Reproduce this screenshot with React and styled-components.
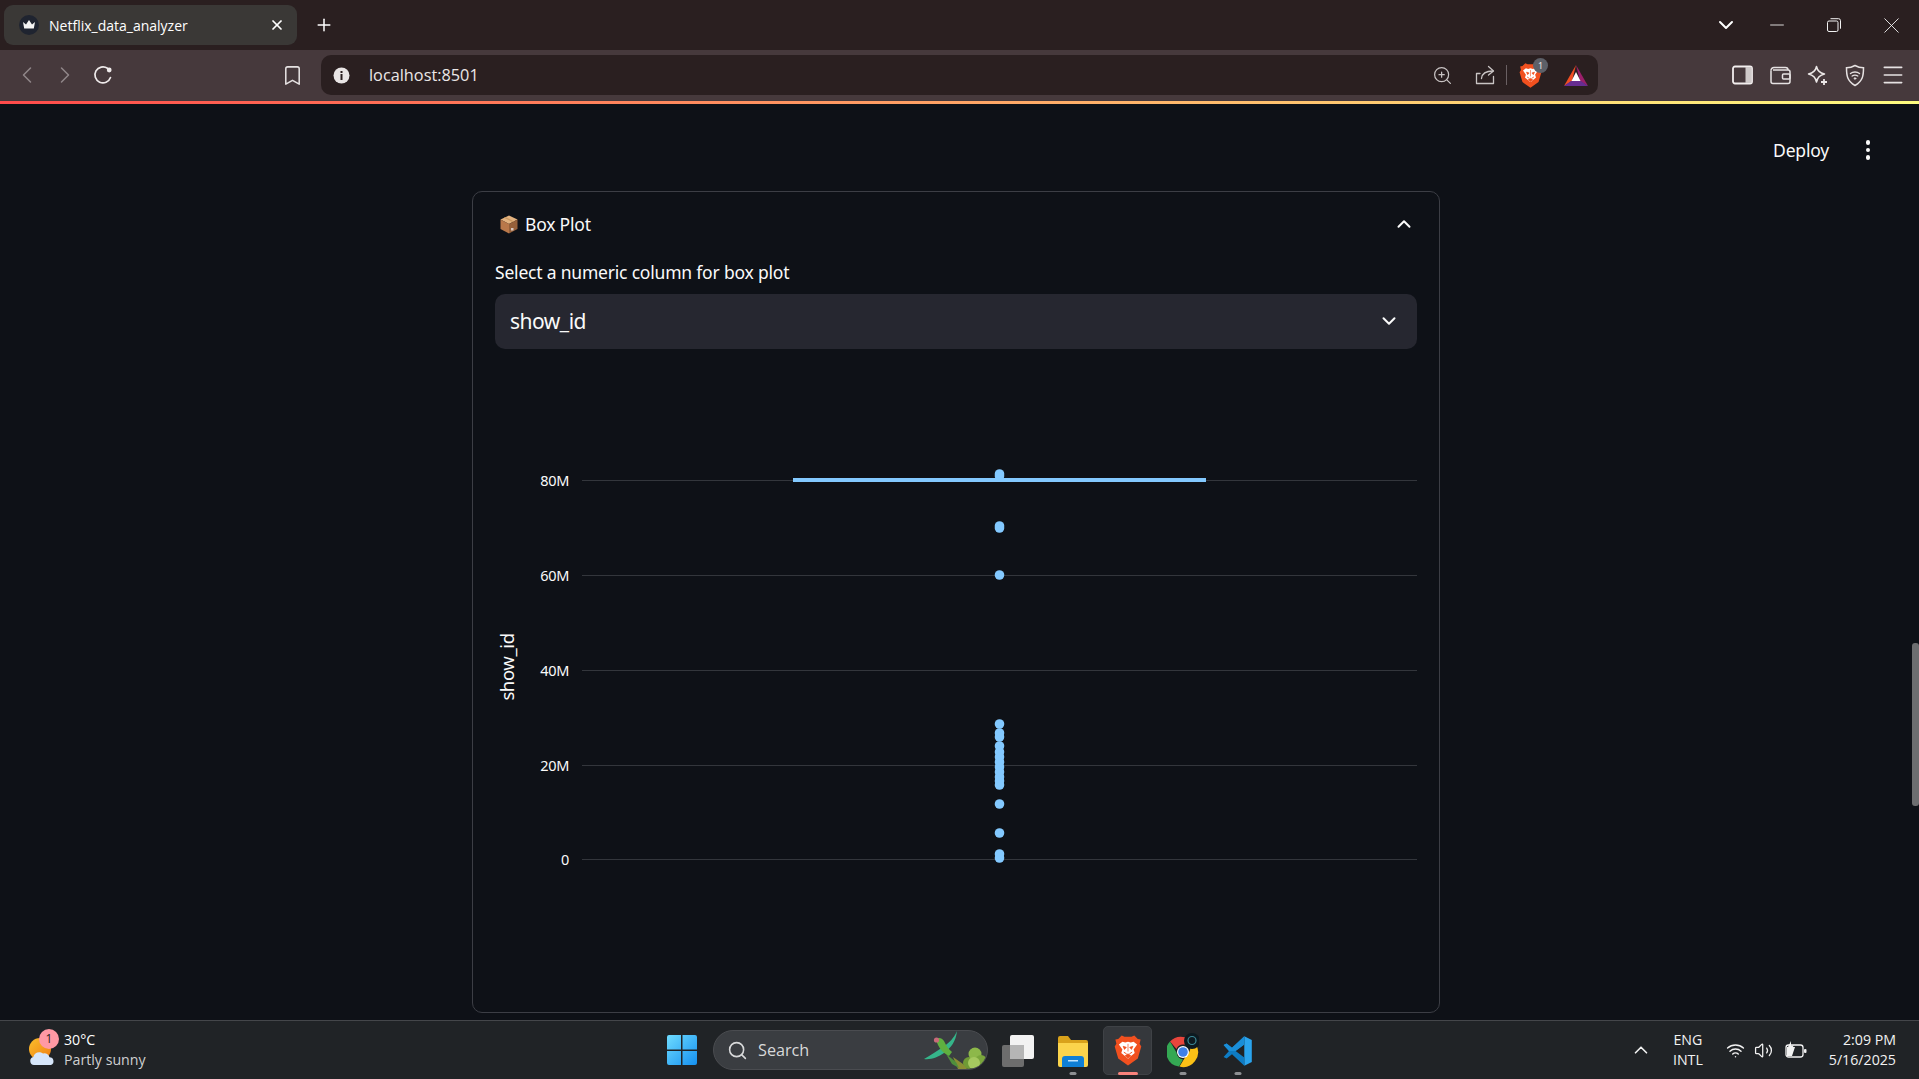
import React from 'react';
import styled, { createGlobalStyle } from 'styled-components';
import {
  ChevronLeft, ChevronRight, ChevronDown, ChevronUp, Bookmark, ZoomIn, Plus, X, Minus,
  Menu, Search, Wifi, Volume2,
} from 'lucide-react';

const GlobalStyle = createGlobalStyle`
  html, body { margin: 0; padding: 0; background: #0e1117; }
  * { box-sizing: border-box; }
  body { font-family: "Noto Sans", "Open Sans", sans-serif; color: #fafafa; }
`;

const Page = styled.div`
  height: 100vh;
  display: flex;
  flex-direction: column;
  overflow: hidden;
`;

/* browser chrome */
const TabStrip = styled.div`
  height: 50px;
  flex: none;
  display: flex;
  align-items: stretch;
  padding: 5px 0 5px 4px;
  background: #2a1f20;
  color: #fff;
`;

const Tab = styled.div`
  width: 293px;
  display: flex;
  align-items: center;
  padding: 0 12px 0 15px;
  background: #3a3836;
  border-radius: 9px;
  font-family: "Open Sans", sans-serif;
  font-size: 14px;
`;

const TabTitle = styled.span`
  flex: 1;
  margin-left: 10px;
  white-space: nowrap;
`;

const Slot = styled.div`
  position: relative;
  width: ${(p) => p.$w}px;
  height: 100%;
  flex: none;
  display: flex;
  align-items: center;
  justify-content: center;
  color: ${(p) => p.$color || 'inherit'};
`;

const Grow = styled.div`
  flex: 1;
`;

const Toolbar = styled.div`
  height: 51px;
  flex: none;
  display: flex;
  align-items: stretch;
  padding: 5px 7px 6px 8px;
  background: #46393c;
  color: #e6e2e2;
`;

const AddressBar = styled.div`
  width: 1277px;
  margin-left: 11px;
  margin-right: 126px;
  flex: none;
  display: flex;
  align-items: center;
  background: #2a1f20;
  border-radius: 10px;
`;

const Url = styled.span`
  margin-left: 8px;
  font-family: "Open Sans", sans-serif;
  font-size: 16.3px;
  color: #ebe7e7;
`;

const Divider = styled.div`
  width: 1px;
  height: 20px;
  background: #6a6063;
`;

const Badge = styled.span`
  position: absolute;
  top: 3px;
  left: 26px;
  width: 15px;
  height: 15px;
  border-radius: 50%;
  background: #5d6068;
  color: #e8e8e8;
  font-size: 9px;
  line-height: 15px;
  text-align: center;
`;

const LoadBar = styled.div`
  height: 3px;
  flex: none;
  background: linear-gradient(90deg, #ff4b4b, #fffd80);
`;

/* streamlit page */
const Main = styled.main`
  position: relative;
  flex: 1;
  min-height: 0;
  display: flex;
  flex-direction: column;
  background: #0e1117;
`;

const TopBar = styled.div`
  height: 87px;
  flex: none;
  display: flex;
  justify-content: flex-end;
  align-items: flex-start;
  padding: 34px 39px 0 0;
`;

const Deploy = styled.span`
  margin-right: 27px;
  font-size: 17.5px;
  line-height: 24px;
  letter-spacing: -0.2px;
`;

const Kebab = styled.div`
  width: 24px;
  height: 24px;
  display: flex;
  flex-direction: column;
  align-items: center;
  justify-content: center;
  gap: 3px;
  & > i {
    width: 4.5px;
    height: 4.5px;
    border-radius: 50%;
    background: #fafafa;
  }
`;

const Card = styled.section`
  width: 968px;
  height: 822px;
  flex: none;
  margin-left: 472px;
  padding: 0 22px 0 22px;
  border: 1px solid #3c3e45;
  border-radius: 10px;
`;

const Summary = styled.div`
  height: 66px;
  display: flex;
  align-items: center;
  padding: 0 2px 2px 5px;
  font-size: 17.5px;
  letter-spacing: -0.2px;
`;

const SummaryTitle = styled.span`
  flex: 1;
  margin-left: 7px;
`;

const FieldLabel = styled.div`
  height: 36px;
  padding-top: 2px;
  font-size: 17.5px;
  line-height: 24px;
  letter-spacing: -0.2px;
`;

const Select = styled.div`
  width: 922px;
  height: 55px;
  display: flex;
  align-items: center;
  justify-content: space-between;
  padding: 0 17px 1px 15px;
  background: #262730;
  border-radius: 10px;
  font-size: 21px;
  letter-spacing: -0.5px;
`;

const Chart = styled.svg`
  display: block;
  margin-top: 11px;
`;

const Tick = styled.text`
  fill: #fafafa;
  font-family: "Noto Sans", sans-serif;
  font-size: 14.5px;
  letter-spacing: -0.3px;
  text-anchor: end;
`;

const AxisTitle = styled.text`
  fill: #fafafa;
  font-family: "Noto Sans", sans-serif;
  font-size: 18.5px;
  letter-spacing: -0.4px;
  text-anchor: middle;
`;

const ScrollThumb = styled.div`
  position: absolute;
  top: 539px;
  right: 0;
  width: 7px;
  height: 163px;
  border-radius: 3px;
  background: #6d6e70;
`;

/* windows taskbar */
const Taskbar = styled.footer`
  height: 59px;
  flex: none;
  display: flex;
  align-items: stretch;
  background: #202326;
  border-top: 1px solid #44464a;
  font-family: "Open Sans", sans-serif;
  color: #fff;
`;

const Weather = styled.div`
  width: 661px;
  flex: none;
  display: flex;
  align-items: center;
  padding: 0 0 1px 28px;
`;

const WeatherIcon = styled.div`
  position: relative;
  width: 28px;
  height: 28px;
  margin: 4px 8px 0 0;
`;

const WeatherBadge = styled.span`
  position: absolute;
  top: -9px;
  left: 11px;
  width: 20px;
  height: 20px;
  border-radius: 50%;
  background: #ff99a4;
  color: #2a1f20;
  font-size: 12px;
  line-height: 20px;
  text-align: center;
`;

const TwoLines = styled.div`
  display: flex;
  flex-direction: column;
  align-items: ${(p) => p.$align || 'flex-start'};
  gap: 1px;
  margin: 0 ${(p) => p.$right || 0}px 1px ${(p) => p.$left || 0}px;
  font-size: 14.2px;
  line-height: 19px;
`;

const Muted = styled.span`
  color: #cfd0d1;
`;

const WinSlot = styled(Slot)`
  height: auto;
`;

const SearchPill = styled.div`
  width: 275px;
  height: 40px;
  margin: auto 5px auto 10px;
  flex: none;
  display: flex;
  align-items: center;
  padding-left: 13px;
  border-radius: 20px;
  background: #3a3d41;
  border: 1px solid #4a4c50;
  color: #d8d9da;
  font-size: 16.2px;
  overflow: hidden;
`;

const SearchText = styled.span`
  flex: 1;
  margin-left: 10px;
`;

const Tile = styled(Slot)`
  margin: 5px 0 4px;
  height: auto;
  border-radius: 5px;
  background: ${(p) => (p.$active ? '#35383c' : 'transparent')};
  border: 1px solid ${(p) => (p.$active ? '#3f4246' : 'transparent')};
  &::after {
    content: '';
    display: ${(p) => (p.$dot ? 'block' : 'none')};
    position: absolute;
    bottom: -1px;
    left: 50%;
    transform: translateX(-50%);
    width: ${(p) => (p.$active ? 20 : 7)}px;
    height: 3px;
    border-radius: 2px;
    background: ${(p) => (p.$active ? '#f8837c' : '#8d8f92')};
  }
`;

const Tray = styled.div`
  margin-left: auto;
  padding-right: 23px;
  display: flex;
  align-items: center;
  color: #f2f2f2;
`;

/* drawings */
const Favicon = () => (
  <svg width="20" height="20" viewBox="0 0 20 20">
    <circle cx="10" cy="10" r="10" fill="#1f2430" />
    <path d="M4 7l3 2.5L10 5l3 4.5L16 7l-1.2 6.5H5.2z" fill="#f5f5f5" />
  </svg>
);

const Reload = () => (
  <svg width="22" height="22" viewBox="0 0 22 22" fill="none">
    <path d="M18.500 13.500A8 8 0 1 1 15.500 4.300" stroke="#eeeaea" strokeWidth="1.700" strokeLinecap="round" />
    <circle cx="17.200" cy="6" r="2.400" fill="#eeeaea" />
  </svg>
);

const InfoDot = () => (
  <svg width="17" height="17" viewBox="0 0 17 17">
    <circle cx="8.5" cy="8.5" r="8" fill="#e9e5e5" />
    <rect x="7.5" y="7" width="2" height="6" fill="#2a1f20" />
    <rect x="7.5" y="4" width="2" height="2" fill="#2a1f20" />
  </svg>
);

const ShareIcon = () => (
  <svg width="20" height="20" viewBox="0 0 20 20" fill="none" stroke="#c9c4c4" strokeWidth="1.3" strokeLinecap="round" strokeLinejoin="round">
    <path d="M5 8.5H1.5V18.5H18.5V11.5" />
    <path d="M6.5 13.5C7 8 11 6 18 6" />
    <path d="M13.5 1.5L18.5 6l-5 4" />
  </svg>
);

const BraveLogo = ({ size = 23 }) => (
  <svg width={size} height={size * 1.15} viewBox="0 0 20 23">
    <path d="M5.500 1L7.500 2h5L14.500 1 17 3.500 19 4 18.300 7 19.500 9 17 17.500 10 22.500 3 17.500.5 9 1.700 7 1 4 3 3.500z" fill="#f1501f" />
    <path d="M3.500 7.500L6 5.500 8 6l2-.5 2 .5 2-.5 2.500 2-2.500 3.500.8 2.500-3.300 2.800-1 1.200h-1l-1-1.200L5.200 13.500 6 11z" fill="#fff" />
    <path d="M6.500 8.800l2.300.7-1.300 1.500zM13.500 8.800l-2.300.7 1.300 1.500zM10 7v5.500M8 15.500l2-1.300 2 1.300-2 2z" fill="#f1501f" stroke="#f1501f" strokeWidth=".5" />
    <path d="M7 13l2 1.200M13 13l-2 1.200" stroke="#f1501f" strokeWidth=".7" />
  </svg>
);

const BatLogo = () => (
  <svg width="24" height="22" viewBox="0 0 24 22">
    <polygon points="12,1 0,22 8,17" fill="#f04e22" />
    <polygon points="12,1 24,22 16,17" fill="#9b1f6b" />
    <polygon points="0,22 24,22 17,17 7,17" fill="#662d91" />
    <polygon points="12,8 7.5,17 16.5,17" fill="#fff" />
  </svg>
);

const SidebarIcon = () => (
  <svg width="21" height="20" viewBox="0 0 21 20" fill="none">
    <rect x="1" y="1.5" width="19" height="17" rx="2" stroke="#f2eeee" strokeWidth="1.8" />
    <rect x="13.5" y="2" width="6" height="16" fill="#cfcaca" />
  </svg>
);

const WalletIcon = () => (
  <svg width="21" height="20" viewBox="0 0 21 20" fill="none" stroke="#e6e2e2" strokeWidth="1.5" strokeLinejoin="round">
    <path d="M1 5.5V16.5a2 2 0 0 0 2 2H18a2 2 0 0 0 2-2V7a2 2 0 0 0-2-2H3" />
    <path d="M1 5.5A3 3 0 0 1 4 2.5H15.5a2.5 2.5 0 0 1 2.5 2.5" />
    <rect x="12.5" y="9" width="7.5" height="5" rx="1" />
  </svg>
);

const LeoIcon = () => (
  <svg width="21" height="21" viewBox="0 0 21 21" fill="none" stroke="#ebe7e7" strokeWidth="1.5" strokeLinejoin="round">
    <path d="M9.500 1.500c.8 4 3 6.300 8 7.500-5 1.200-7.200 3.500-8 8-.8-4.500-3-6.800-8-8 5-1.200 7.200-3.500 8-7.500z" />
    <path d="M17 14v6M14 17h6" strokeWidth="1.800" />
  </svg>
);

const ShieldIcon = () => (
  <svg width="20" height="23" viewBox="0 0 20 23" fill="none" stroke="#e6e2e2" strokeLinecap="round">
    <path d="M10 1.500c2.500 1.500 5.500 2.300 8.500 2.300 0 7.500-.5 13-8.500 17.700C2 16.800 1.500 11.300 1.500 3.800c3 0 6-.8 8.500-2.300z" strokeWidth="1.500" />
    <path d="M5.500 9.500c2.500-2 6.500-2 9 0M7.200 12c1.500-1 4-1 5.600 0" strokeWidth="1.400" />
    <circle cx="10" cy="14.500" r=".8" fill="#e6e2e2" />
  </svg>
);

const RestoreIcon = () => (
  <svg width="14" height="14" viewBox="0 0 14 14" fill="none" stroke="#f2f2f2" strokeWidth="1">
    <rect x=".5" y="3" width="10.500" height="10.500" rx="1.500" />
    <path d="M3.500.7h8a2 2 0 0 1 2 2v8" />
  </svg>
);

const BoxEmoji = () => (
  <svg width="18" height="19" viewBox="0 0 18 19">
    <polygon points="9,0.500 17.500,4.500 9,9 0.500,4.500" fill="#e3b27f" />
    <polygon points="0.500,4.500 9,9 9,18.500 0.500,14" fill="#b9784a" />
    <polygon points="17.500,4.500 9,9 9,18.500 17.500,14" fill="#96603a" />
    <polygon points="4,2.700 12.500,7.100 14,6.400 5.500,2" fill="#c9975f" />
    <rect x="11" y="13" width="2.500" height="2.500" fill="#d9c8c0" />
  </svg>
);

const WeatherArt = () => (
  <svg width="28" height="28" viewBox="0 0 28 28">
    <defs>
      <linearGradient id="sun" x1="0" y1="0" x2="1" y2="1">
        <stop offset="0" stopColor="#fbbf2c" />
        <stop offset="1" stopColor="#ef7d12" />
      </linearGradient>
    </defs>
    <circle cx="12" cy="11" r="11" fill="url(#sun)" />
    <path d="M6 27a4 4 0 0 1-.6-7.900A6 6 0 0 1 15 15.500a5 5 0 0 1 6.500 3.800A4 4 0 0 1 23 27z" fill="#d6e6fa" />
  </svg>
);

const WinLogo = () => (
  <svg width="30" height="30" viewBox="0 0 30 30">
    <defs>
      <linearGradient id="win" x1="0" y1="0" x2="1" y2="1">
        <stop offset="0" stopColor="#6fdcff" />
        <stop offset="1" stopColor="#1590f0" />
      </linearGradient>
    </defs>
    <path d="M0 2a2 2 0 0 1 2-2h12v14.500H0zM15.500 0H28a2 2 0 0 1 2 2v12.500H15.500zM0 16h14v14H2a2 2 0 0 1-2-2zM15.500 16H30v12a2 2 0 0 1-2 2H15.500z" fill="url(#win)" />
  </svg>
);

const Parrot = () => (
  <svg width="64" height="40" viewBox="0 0 64 40">
    <circle cx="46" cy="33" r="6" fill="#6f9a35" />
    <circle cx="52" cy="24" r="6.500" fill="#8db84a" />
    <circle cx="58" cy="31" r="6" fill="#7aa63c" />
    <circle cx="51" cy="33" r="6" fill="#a5c95f" />
    <path d="M30 27l10 7 4 5h-9z" fill="#8a8f33" />
    <path d="M34 1C31 8 26 13 20 17c-6 4-12 8-19 12 7 1 14-2 20-6 7-5 12-12 13-22z" fill="#35b58a" />
    <path d="M13 9c3-2 6-1 8 2 2 4 4 8 8 11l-3 4c-6-3-11-8-13-17z" fill="#5fb03f" />
    <circle cx="13.500" cy="10" r="2.600" fill="#c96a7a" />
    <path d="M23 24l10 8 3 6-7-4z" fill="#4f8f3c" />
  </svg>
);

const TaskView = () => (
  <svg width="32" height="32" viewBox="0 0 32 32">
    <rect x="0" y="10" width="22" height="22" rx="2" fill="#6d6d6d" />
    <rect x="8" y="0" width="24" height="24" rx="2" fill="#f2f2f2" />
    <rect x="8" y="10" width="14" height="14" fill="#b5b5b5" />
  </svg>
);

const Folder = () => (
  <svg width="30" height="32" viewBox="0 0 30 32">
    <path d="M0 3a2 2 0 0 1 2-2h8l3 4h15a2 2 0 0 1 2 2v3H0z" fill="#d9a21b" />
    <path d="M0 8h30v22a2 2 0 0 1-2 2H2a2 2 0 0 1-2-2z" fill="#fbd44c" />
    <path d="M4 24a3 3 0 0 1 3-3h16a3 3 0 0 1 3 3v8H4z" fill="#0f7fd6" />
    <rect x="10" y="25" width="10" height="1.500" fill="#bfe4ff" />
  </svg>
);

const ChromeLogo = () => (
  <svg width="32" height="36" viewBox="0 0 32 36">
    <path d="M16 4a15 15 0 0 1 13 7.500H16A7 7 0 0 0 9.500 16L3 8.500A15 15 0 0 1 16 4z" fill="#e8453c" />
    <path d="M3 8.500L9.500 19.500A7.500 7.500 0 0 0 16 26.500L12 33.500A15 15 0 0 1 3 8.500z" fill="#34a853" />
    <path d="M29 11.500A15 15 0 0 1 12.500 33.600L19.500 22A7.500 7.500 0 0 0 22 11.500z" fill="#fbc116" />
    <circle cx="16" cy="19" r="6" fill="#fff" />
    <circle cx="16" cy="19" r="4.800" fill="#3d7fe8" />
    <circle cx="25" cy="8" r="8" fill="#0d1a20" />
    <circle cx="25" cy="7.500" r="4" fill="none" stroke="#3c8a98" strokeWidth="1.200" />
  </svg>
);

const VsCode = () => (
  <svg width="30" height="32" viewBox="0 0 100 100">
    <path d="M71 1L96 13V87L71 99z" fill="#2aa4ee" />
    <path d="M71 1L30 39 12 25 2 30 20 50 2 70 12 75 30 61 71 99V72L42 50 71 28z" fill="#0e7cc4" />
    <path d="M71 1L30 39 12 25 2 30 20 50 42 50 71 28z" fill="#1a8ed8" />
  </svg>
);

const BatteryIcon = () => (
  <svg width="22" height="18" viewBox="0 0 22 18" fill="none">
    <rect x="1" y="4" width="17" height="12" rx="2.500" stroke="#f2f2f2" strokeWidth="1.300" />
    <path d="M2 15V6h8l-3 9z" fill="#f2f2f2" />
    <rect x="19" y="8" width="2.500" height="4" rx="1" fill="#f2f2f2" />
    <path d="M6 0L3 6h3L4.500 10 9 4.500H6z" fill="#f2f2f2" />
  </svg>
);

// points of the box plot, in page coordinates
const gridLines = [
  { label: '80M', y: 480 },
  { label: '60M', y: 575 },
  { label: '40M', y: 670 },
  { label: '20M', y: 765 },
  { label: '0', y: 859 },
];
const outliers = [474, 476, 526, 528, 575, 724, 733, 737, 746, 752, 757, 762, 767, 772, 777, 781, 785, 804, 833, 854, 858];

const BoxPlot = () => (
  <Chart width="922" height="640" viewBox="495 360 922 640">
    {gridLines.map((g) => (
      <g key={g.label}>
        <line x1="582" x2="1417" y1={g.y + 0.5} y2={g.y + 0.5} stroke="#33363c" strokeWidth="1" />
        <Tick x="569" y={g.y + 6}>{g.label}</Tick>
      </g>
    ))}
    <rect x="793" y="478" width="413" height="4" fill="#83c9ff" />
    {outliers.map((y) => (
      <circle key={y} cx="999.5" cy={y} r="4.800" fill="#83c9ff" />
    ))}
    <AxisTitle transform="translate(514 667) rotate(-90)">show_id</AxisTitle>
  </Chart>
);

export default function App() {
  return (
    <Page>
      <GlobalStyle />
      <TabStrip>
        <Tab>
          <Favicon />
          <TabTitle>Netflix_data_analyzer</TabTitle>
          <X size={16} strokeWidth={2.6} />
        </Tab>
        <Slot $w={54}><Plus size={20} strokeWidth={1.8} /></Slot>
        <Grow />
        <Slot $w={46}><ChevronDown size={24} strokeWidth={2} /></Slot>
        <Slot $w={56}><Minus size={22} strokeWidth={0.9} /></Slot>
        <Slot $w={58}><RestoreIcon /></Slot>
        <Slot $w={56}><X size={27} strokeWidth={0.75} /></Slot>
      </TabStrip>
      <Toolbar>
        <Slot $w={38} $color="#8f8588"><ChevronLeft size={28} strokeWidth={1.3} /></Slot>
        <Slot $w={38} $color="#8f8588"><ChevronRight size={28} strokeWidth={1.3} /></Slot>
        <Slot $w={37}><Reload /></Slot>
        <Slot $w={153} />
        <Slot $w={36}><Bookmark size={23} strokeWidth={1.6} /></Slot>
        <AddressBar>
          <Slot $w={40}><InfoDot /></Slot>
          <Url>localhost:8501</Url>
          <Grow />
          <Slot $w={44} $color="#c9c4c4"><ZoomIn size={21} strokeWidth={1.4} /></Slot>
          <Slot $w={42}><ShareIcon /></Slot>
          <Divider />
          <Slot $w={46}>
            <BraveLogo />
            <Badge>1</Badge>
          </Slot>
          <Slot $w={45}><BatLogo /></Slot>
        </AddressBar>
        <Slot $w={37.5}><SidebarIcon /></Slot>
        <Slot $w={37.5}><WalletIcon /></Slot>
        <Slot $w={37.5}><LeoIcon /></Slot>
        <Slot $w={37.5}><ShieldIcon /></Slot>
        <Slot $w={37.5}><Menu size={26} strokeWidth={1.5} /></Slot>
      </Toolbar>
      <LoadBar />
      <Main>
        <TopBar>
          <Deploy>Deploy</Deploy>
          <Kebab><i /><i /><i /></Kebab>
        </TopBar>
        <Card>
          <Summary>
            <BoxEmoji />
            <SummaryTitle>Box Plot</SummaryTitle>
            <ChevronUp size={22} strokeWidth={2.2} />
          </Summary>
          <FieldLabel>Select a numeric column for box plot</FieldLabel>
          <Select>
            show_id
            <ChevronDown size={22} strokeWidth={2.2} />
          </Select>
          <BoxPlot />
        </Card>
        <ScrollThumb />
      </Main>
      <Taskbar>
        <Weather>
          <WeatherIcon>
            <WeatherArt />
            <WeatherBadge>1</WeatherBadge>
          </WeatherIcon>
          <TwoLines>
            <span>30°C</span>
            <Muted>Partly sunny</Muted>
          </TwoLines>
        </Weather>
        <WinSlot $w={42}><WinLogo /></WinSlot>
        <SearchPill>
          <Search size={21} strokeWidth={1.8} />
          <SearchText>Search</SearchText>
          <Parrot />
        </SearchPill>
        <Tile $w={50}><TaskView /></Tile>
        <Tile $w={60} $dot><Folder /></Tile>
        <Tile $w={49} $dot $active><BraveLogo size={28} /></Tile>
        <Tile $w={62} $dot><ChromeLogo /></Tile>
        <Tile $w={48} $dot><VsCode /></Tile>
        <Tray>
          <Slot $w={24}><ChevronUp size={22} strokeWidth={1.8} /></Slot>
          <TwoLines $align="center" $left={20} $right={19}>
            <span>ENG</span>
            <span>INTL</span>
          </TwoLines>
          <Slot $w={28}><Wifi size={19} strokeWidth={1.8} /></Slot>
          <Slot $w={28}><Volume2 size={19} strokeWidth={1.6} /></Slot>
          <Slot $w={36}><BatteryIcon /></Slot>
          <TwoLines $align="flex-end" $left={15}>
            <span>2:09 PM</span>
            <span>5/16/2025</span>
          </TwoLines>
        </Tray>
      </Taskbar>
    </Page>
  );
}
